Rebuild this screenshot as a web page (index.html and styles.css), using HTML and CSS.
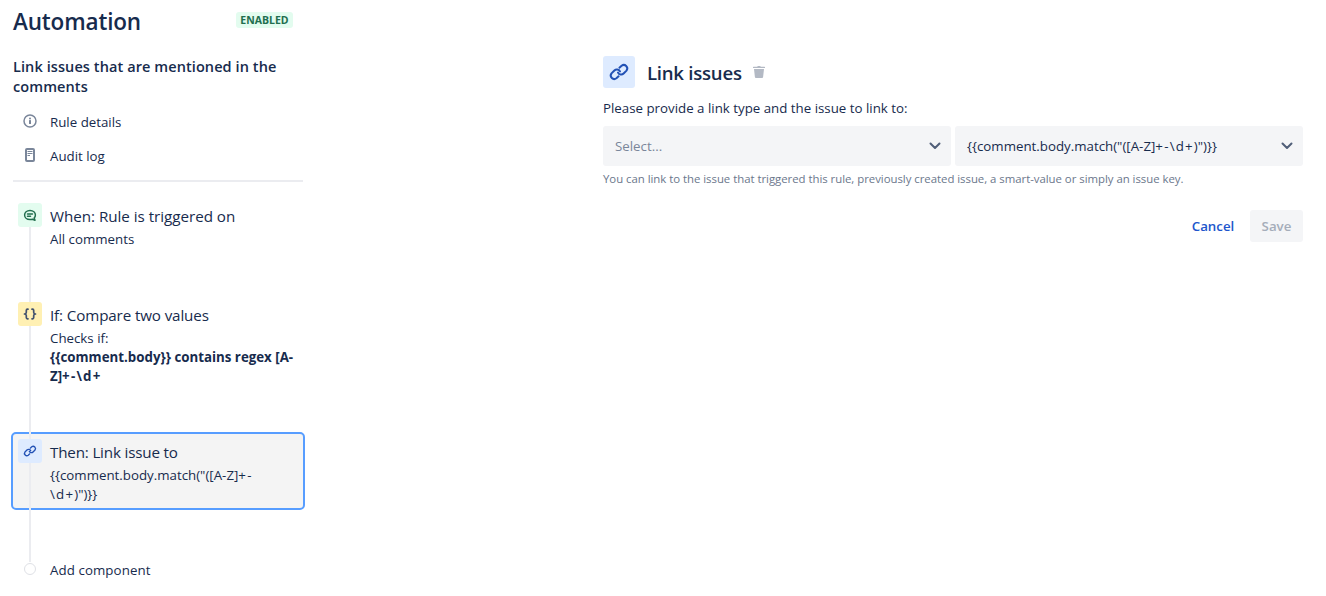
FILE: index.html
```html
<!DOCTYPE html>
<html lang="en">
<head>
<meta charset="utf-8">
<title>Automation</title>
<link rel="stylesheet" href="styles.css">
</head>
<body>
<svg class="defs" width="0" height="0">
  <symbol id="link" viewBox="0 0 24 24">
    <g fill="none" stroke="currentColor" stroke-width="2" stroke-linecap="round" stroke-linejoin="round">
      <path d="M12.400 7.700l2.200-2a3.500 3.500 0 0 1 4.900 4.900l-2.900 2.900a3.500 3.500 0 0 1-5.600-.9"/>
      <path d="M11.600 16.300l-2.200 2a3.500 3.500 0 0 1-4.900-4.900l2.900-2.900a3.500 3.500 0 0 1 5.600.9"/>
    </g>
  </symbol>
  <symbol id="chevron" viewBox="0 0 12 8">
    <path d="M1.500 1.500L6 6l4.500-4.500" fill="none" stroke="currentColor" stroke-width="2" stroke-linecap="round" stroke-linejoin="round"/>
  </symbol>
</svg>
<div class="page">
  <aside class="sidebar">
    <header class="heading">
      <h1 class="title">Automation</h1>
      <span class="badge">ENABLED</span>
    </header>
    <h2 class="rule-name">Link issues that are mentioned in the comments</h2>
    <nav class="nav">
      <a class="nav-item">
        <svg class="nav-icon" width="14" height="14" viewBox="0 0 14 14"><circle cx="7" cy="7" r="6" fill="none" stroke="currentColor" stroke-width="1.500"/><circle cx="7" cy="4.400" r="1" fill="currentColor"/><rect x="6" y="6" width="2" height="4" rx=".5" fill="currentColor"/></svg>
        <span>Rule details</span>
      </a>
      <a class="nav-item">
        <svg class="nav-icon" width="14" height="14" viewBox="0 0 14 14"><rect x="3" y="1" width="8" height="12" rx="1" fill="none" stroke="currentColor" stroke-width="2"/><path d="M4.500 3.500h5M4.500 5.500h5M4.500 7.500h2.500" stroke="currentColor" stroke-width="1"/></svg>
        <span>Audit log</span>
      </a>
    </nav>
    <div class="steps">
      <section class="step">
        <span class="step-icon green"><svg width="14" height="14" viewBox="0 0 14 14" fill="none" stroke="currentColor" stroke-width="1.500" stroke-linecap="round" stroke-linejoin="round"><path d="M9.500 11.200C8.700 11.500 7.900 11.600 7 11.600 3.800 11.600 1.600 9.600 1.600 7S3.800 2.400 7 2.400 12.400 4.400 12.400 7c0 1.200-.4 2.200-1.200 3l.8 2.200-2.500-1"/><path d="M4.500 6h5M4.500 8.200h3"/></svg></span>
        <div class="step-body">
          <h3 class="step-title">When: Rule is triggered on</h3>
          <p class="step-text">All comments</p>
        </div>
      </section>
      <section class="step">
        <span class="step-icon yellow"><svg width="14" height="12" viewBox="0 0 14 12" fill="none" stroke="currentColor" stroke-width="1.700" stroke-linecap="round" stroke-linejoin="round"><path d="M5 1.200H4.500Q3.300 1.200 3.300 2.400V4.500Q3.300 5.600 1.500 6 3.300 6.400 3.300 7.500V9.600Q3.300 10.800 4.500 10.800H5M9 1.200h.5Q10.700 1.200 10.700 2.400V4.500Q10.700 5.600 12.500 6 10.700 6.400 10.700 7.500V9.600Q10.700 10.800 9.500 10.800H9"/></svg></span>
        <div class="step-body">
          <h3 class="step-title compare">If: Compare two values</h3>
          <p class="step-text">Checks if:</p>
          <p class="step-text strong">{{comment.body}} contains regex [A-<br>Z]<span class="wide">+-\d+</span></p>
        </div>
      </section>
      <section class="step selected">
        <span class="step-icon blue"><svg width="16" height="16"><use href="#link"/></svg></span>
        <div class="step-body">
          <h3 class="step-title then">Then: Link issue to</h3>
          <p class="step-text">{{comment.body.match("([A-Z]<span class="wide">+-</span><br><span class="wide">\d+</span>)")}}</p>
        </div>
      </section>
      <div class="add">
        <span class="add-dot"></span>
        <span class="add-label">Add component</span>
      </div>
    </div>
  </aside>
  <main class="editor">
    <header class="editor-head">
      <span class="editor-icon"><svg width="24" height="24"><use href="#link"/></svg></span>
      <h2 class="editor-title">Link issues</h2>
      <svg class="trash" width="12" height="12" viewBox="0 0 12 12" fill="currentColor"><path d="M.5.800h3.700Q4.500 0 5 0h2q.5 0 .8.800h3.700Q12 .8 12 1.300V2H0v-.7Q0 .8.500.800zM1 3h10l-.9 8.100q-.1.900-1 .9H2.900q-.9 0-1-.9z"/></svg>
    </header>
    <p class="prompt">Please provide a link type and the issue to link to:</p>
    <div class="fields">
      <div class="select"><span class="placeholder">Select...</span><svg class="chevron" width="12" height="8"><use href="#chevron"/></svg></div>
      <div class="select"><span>{{comment.body.match("([A-Z]<span class="wide">+-\d+</span>)")}}</span><svg class="chevron" width="12" height="8"><use href="#chevron"/></svg></div>
    </div>
    <p class="hint">You can link to the issue that triggered this rule, previously created issue, a smart-value or simply an issue key.</p>
    <footer class="actions">
      <button class="btn cancel">Cancel</button>
      <button class="btn save">Save</button>
    </footer>
  </main>
</div>
</body>
</html>
```
FILE: styles.css
```css
* { box-sizing: border-box; }
body {
  margin: 0;
  background: #fff;
  color: #172b4d;
  font: 400 13.300px/20px "Open Sans", "Noto Sans", sans-serif;
}
h1, h2, h3, p { margin: 0; font-weight: 400; }
.defs { position: absolute; }
.page { display: flex; height: 596px; overflow: hidden; white-space: nowrap; }
.sidebar { width: 303px; padding-left: 13px; }
.heading { display: flex; justify-content: space-between; padding: 8px 10px 0 0; height: 57px; }
.title { font-size: 22.500px; font-weight: 600; line-height: 28px; letter-spacing: -.15px; }
.badge {
  width: 57px; height: 16px; margin-top: 4px;
  border-radius: 3px; background: #e3fcef; color: #216e4e;
  font-size: 10.500px; font-weight: 700; line-height: 16px; text-align: center;
}
.rule-name { font-size: 14.500px; font-weight: 600; line-height: 20px; letter-spacing: .09px; white-space: normal; }
.nav { padding: 15px 0 14px; border-bottom: 2px solid #ebecf0; display: grid; gap: 14px; }
.nav-item { display: flex; align-items: center; gap: 13px; padding-left: 10px; }
.nav-icon { color: #7a869a; margin-top: -2px; }
.steps { position: relative; margin: 14px -2px 0; }
.steps::before {
  content: ""; position: absolute; left: 18px; top: 31px; width: 2px; height: 335px;
  background: #ebecf0; z-index: 1;
}
.step {
  display: flex; gap: 8px; padding: 5px; margin-bottom: 40px;
  border: 2px solid transparent; border-radius: 5px;
}
.step.selected { background: #f4f4f4; border-color: #579dff; margin-bottom: 50px; }
.step-icon {
  position: relative; z-index: 2; flex: none; width: 24px; height: 24px; border-radius: 3px;
  display: flex; align-items: center; justify-content: center;
}
.green { background: #e3fcef; color: #216e4e; }
.yellow { background: #fff0b3; color: #42526e; }
.blue { background: #deebff; color: #2251b5; }
.step-body { padding-top: 3px; margin-bottom: -1px; }
.step-title { font-size: 15.200px; line-height: 20px; margin-bottom: 4px; letter-spacing: -.03px; }
.compare { letter-spacing: -.13px; }
.then { letter-spacing: -.18px; }
.step-text { line-height: 19px; }
.strong { font-weight: 700; }
.wide { letter-spacing: 1.200px; }
.add { display: flex; align-items: center; gap: 14px; padding-left: 13px; }
.add-dot { position: relative; z-index: 2; width: 12px; height: 12px; margin-top: -2px; border: 1px solid #dfe1e6; border-radius: 50%; background: #fff; }
.add-label { letter-spacing: .08px; }
.editor { width: 700px; margin-left: 300px; padding-top: 56px; }
.editor-head { display: flex; align-items: center; height: 32px; }
.editor-icon { width: 32px; height: 32px; border-radius: 3px; background: #deebff; color: #2251b5; display: grid; place-items: center; margin-right: 12px; }
.editor-title { font-size: 18.600px; font-weight: 600; line-height: 32px; letter-spacing: -.25px; padding-top: 2px; margin-right: 12px; width: 94px; }
.trash { color: #b3b9c4; }
.prompt { margin-top: 10px; }
.fields { display: grid; grid-template-columns: 1fr 1fr; gap: 4px; margin-top: 8px; }
.select { display: flex; align-items: center; justify-content: space-between; height: 40px; padding: 0 10px 0 12px; border-radius: 3px; background: #f4f5f7; }
.chevron { color: #505f79; }
.placeholder { color: #7a869a; }
.hint { margin-top: 3px; color: #6b778c; font-size: 11.400px; letter-spacing: -.03px; }
.actions { display: flex; justify-content: flex-end; gap: 4px; margin-top: 21px; }
.btn { height: 32px; padding: 0; border: 0; border-radius: 3px; background: none; font: inherit; font-weight: 600; line-height: 32px; }
.cancel { width: 66px; color: #2055cc; text-align: center; }
.save { width: 53px; background: #f4f5f7; color: #a5adba; }
```
